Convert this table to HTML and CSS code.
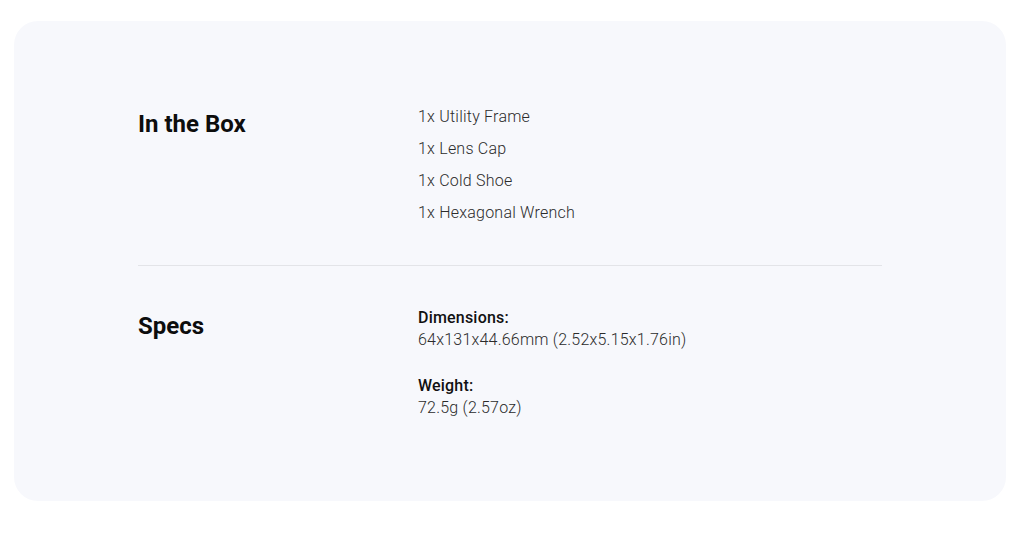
FILE: index.html
```html
<!DOCTYPE html>
<html lang="en">
<head>
<meta charset="utf-8">
<title>In the Box &amp; Specs</title>
<link rel="stylesheet" href="styles.css">
</head>
<body>
<main class="page">
  <section class="card">
    <div class="row row--box">
      <h2 class="heading">In the Box</h2>
      <ul class="items">
        <li>1x Utility Frame</li>
        <li>1x Lens Cap</li>
        <li>1x Cold Shoe</li>
        <li>1x Hexagonal Wrench</li>
      </ul>
    </div>
    <hr class="divider">
    <div class="row row--specs">
      <h2 class="heading">Specs</h2>
      <dl class="specs">
        <div class="spec">
          <dt>Dimensions:</dt>
          <dd>64x131x44.66mm (2.52x5.15x1.76in)</dd>
        </div>
        <div class="spec">
          <dt>Weight:</dt>
          <dd>72.5g (2.57oz)</dd>
        </div>
      </dl>
    </div>
  </section>
</main>
</body>
</html>
```

FILE: styles.css
```css
* { box-sizing: border-box; }

html, body {
  margin: 0;
  background: #ffffff;
  font-family: Roboto, "Liberation Sans", Arial, sans-serif;
  color: #111;
}

.page {
  padding: 21px 18px 35px 14px;
}

.card {
  background: #f7f8fc;
  border-radius: 24px;
  height: 480px;
  padding: 80px 124px 0 124px;
}

.row {
  display: grid;
  grid-template-columns: 280px 1fr;
  align-items: start;
}

.row--box {
  padding-bottom: 36px;
}

.row--specs {
  padding-top: 41px;
}

.heading {
  margin: 7px 0 0 0;
  font-size: 24px;
  line-height: 32px;
  font-weight: 700;
  color: #0d0d0d;
}

.row--specs .heading {
  margin-top: 3px;
}

.items {
  list-style: none;
  margin: 0;
  padding: 0;
  font-size: 16px;
  line-height: 32px;
  font-weight: 300;
  letter-spacing: 0.22px;
  color: #2b2b2b;
}

.divider {
  margin: 0;
  border: 0;
  height: 1px;
  background: #e3e4e8;
}

.specs {
  margin: 0;
  display: flex;
  flex-direction: column;
  gap: 24px;
}

.spec dt {
  font-size: 16px;
  line-height: 22px;
  font-weight: 500;
  letter-spacing: 0.2px;
  color: #111;
}

.spec dd {
  margin: 0;
  font-size: 16px;
  line-height: 22px;
  font-weight: 300;
  letter-spacing: 0.22px;
  color: #2b2b2b;
}
```
